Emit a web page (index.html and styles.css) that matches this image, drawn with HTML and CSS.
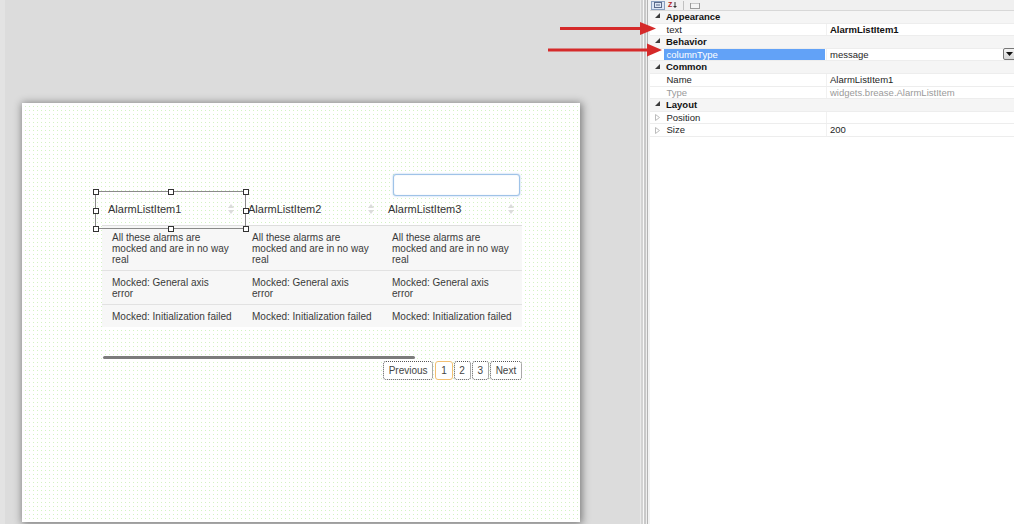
FILE: index.html
```html
<!DOCTYPE html>
<html>
<head>
<meta charset="utf-8">
<link rel="stylesheet" href="styles.css">
</head>
<body>
<div class="app">
  <div class="workspace">
    <div class="canvas">
      <div class="alarm-widget">
        <div class="filter-row"><div class="filter-input"></div></div>
        <div class="grid">
          <div class="hcell"><span>AlarmListItem1</span><svg class="sort" width="6" height="10" viewBox="0 0 6 10"><polygon points="3,0 6,4 0,4"/><polygon points="0,6 6,6 3,10"/></svg></div>
          <div class="hcell"><span>AlarmListItem2</span><svg class="sort" width="6" height="10" viewBox="0 0 6 10"><polygon points="3,0 6,4 0,4"/><polygon points="0,6 6,6 3,10"/></svg></div>
          <div class="hcell"><span>AlarmListItem3</span><svg class="sort" width="6" height="10" viewBox="0 0 6 10"><polygon points="3,0 6,4 0,4"/><polygon points="0,6 6,6 3,10"/></svg></div>

          <div class="cell">All these alarms are mocked and are in no way real</div>
          <div class="cell">All these alarms are mocked and are in no way real</div>
          <div class="cell">All these alarms are mocked and are in no way real</div>

          <div class="cell">Mocked: General axis error</div>
          <div class="cell">Mocked: General axis error</div>
          <div class="cell">Mocked: General axis error</div>

          <div class="cell last">Mocked: Initialization failed</div>
          <div class="cell last">Mocked: Initialization failed</div>
          <div class="cell last">Mocked: Initialization failed</div>
        </div>
        <div class="hscroll"></div>
        <div class="pager">
          <span class="pbtn prev">Previous</span>
          <span class="pbtn active">1</span>
          <span class="pbtn">2</span>
          <span class="pbtn">3</span>
          <span class="pbtn">Next</span>
        </div>
        <div class="selection">
          <i class="h tl"></i><i class="h tm"></i><i class="h tr"></i>
          <i class="h ml"></i><i class="h mr"></i>
          <i class="h bl"></i><i class="h bm"></i><i class="h br"></i>
        </div>
      </div>
    </div>
  </div>
  <div class="splitter"></div>
  <div class="props">
    <div class="toolbar">
      <span class="tb-btn pressed"><svg width="8" height="6" viewBox="0 0 8 6"><rect x="0.5" y="0.5" width="7" height="5" fill="none" stroke="#5a6a8a"/><line x1="2" y1="3" x2="6" y2="3" stroke="#5a6a8a"/></svg></span>
      <span class="tb-az"><b>Z</b><svg width="4" height="6" viewBox="0 0 4 6"><line x1="2" y1="0" x2="2" y2="5" stroke="#333"/><polygon points="0,4 4,4 2,6" fill="#333"/></svg></span>
      <span class="tb-sep"></span>
      <span class="tb-page"><svg width="10" height="6" viewBox="0 0 10 6"><rect x="0.5" y="0" width="9" height="5.5" fill="#f4f4f4" stroke="#9a9a9a"/></svg></span>
    </div>
    <div class="row cat"><span class="gut"><svg width="5" height="5" viewBox="0 0 5 5"><polygon points="5,0 5,5 0,5"/></svg></span><span class="cname">Appearance</span></div>
    <div class="row"><span class="gut"></span><span class="pname">text</span><span class="pval bold">AlarmListItem1</span></div>
    <div class="row cat"><span class="gut"><svg width="5" height="5" viewBox="0 0 5 5"><polygon points="5,0 5,5 0,5"/></svg></span><span class="cname">Behavior</span></div>
    <div class="row"><span class="gut"></span><span class="pname sel">columnType</span><span class="pval">message<span class="dd"><svg width="7" height="4" viewBox="0 0 7 4"><polygon points="0,0 7,0 3.5,4"/></svg></span></span></div>
    <div class="row cat"><span class="gut"><svg width="5" height="5" viewBox="0 0 5 5"><polygon points="5,0 5,5 0,5"/></svg></span><span class="cname">Common</span></div>
    <div class="row"><span class="gut"></span><span class="pname">Name</span><span class="pval">AlarmListItem1</span></div>
    <div class="row ro"><span class="gut"></span><span class="pname">Type</span><span class="pval">widgets.brease.AlarmListItem</span></div>
    <div class="row cat"><span class="gut"><svg width="5" height="5" viewBox="0 0 5 5"><polygon points="5,0 5,5 0,5"/></svg></span><span class="cname">Layout</span></div>
    <div class="row"><span class="gut"><svg class="exp" width="5" height="7" viewBox="0 0 5 7"><polygon points="0.5,0.5 4.5,3.5 0.5,6.5"/></svg></span><span class="pname">Position</span><span class="pval"></span></div>
    <div class="row"><span class="gut"><svg class="exp" width="5" height="7" viewBox="0 0 5 7"><polygon points="0.5,0.5 4.5,3.5 0.5,6.5"/></svg></span><span class="pname">Size</span><span class="pval">200</span></div>
  </div>
</div>
<svg class="arrows" width="1014" height="524" viewBox="0 0 1014 524">
  <line x1="560" y1="28.5" x2="642" y2="28.5" stroke="#d52a2a" stroke-width="3"/>
  <polygon points="640,22 656,28.5 640,35" fill="#d52a2a"/>
  <line x1="548" y1="50" x2="649" y2="50" stroke="#d52a2a" stroke-width="3"/>
  <polygon points="647,43.5 662,50 647,56.5" fill="#d52a2a"/>
</svg>
</body>
</html>
```

FILE: styles.css
```css
* { box-sizing: border-box; }
html, body { margin: 0; padding: 0; }
body {
  width: 1014px;
  height: 524px;
  overflow: hidden;
  position: relative;
  font-family: "Liberation Sans", Arial, sans-serif;
  background: #dcdcdc;
}
.app {
  display: flex;
  width: 1014px;
  height: 524px;
}
.workspace {
  width: 640px;
  height: 524px;
  flex: none;
  overflow: hidden;
  background: #dcdcdc;
  border-left: 5px solid #e3e3e3;
  padding: 103px 0 0 17px;
}
.canvas {
  width: 558px;
  height: 419px;
  background-color: #fff;
  background-image:
    linear-gradient(to right, #fff 3px, transparent 3px),
    linear-gradient(to bottom, #fff 3px, #d3f2c4 3px);
  background-size: 4px 4px;
  box-shadow: 1px 1px 8px 1px rgba(0,0,0,0.45);
  padding: 71px 0 0 80px;
}
.alarm-widget {
  position: relative;
  width: 420px;
}
.filter-row {
  display: flex;
  justify-content: flex-end;
  padding-right: 2px;
}
.filter-input {
  width: 127px;
  height: 22px;
  background: #fff;
  border: 1px solid #9fc3e8;
  border-radius: 3px;
  box-shadow: 0 0 2px rgba(120,170,225,0.7), inset 0 0 1px rgba(120,170,225,0.5);
}
.grid {
  display: grid;
  grid-template-columns: 140px 140px 140px;
  font-size: 10px;
  color: #3a3a3a;
}
.hcell {
  height: 30px;
  border-bottom: 1px solid #dedede;
  padding: 0 8px 3px 6px;
  display: flex;
  align-items: center;
  justify-content: space-between;
  font-size: 11px;
  color: #333;
}
.sort { fill: #dcdcdc; }
.cell {
  background: #f7f7f7;
  padding: 6px 10px 5px;
  line-height: 11px;
  border-bottom: 1px solid #e2e2e2;
}
.cell.last { border-bottom: none; padding-bottom: 5px; }
.hscroll {
  margin: 29px 0 0 1px;
  width: 312px;
  height: 3px;
  background: #7c7c7c;
  border-radius: 2px;
}
.pager {
  display: flex;
  justify-content: flex-end;
  gap: 1px;
  margin-top: 2px;
}
.pbtn {
  height: 19px;
  line-height: 17px;
  padding: 0 4.8px;
  font-size: 10px;
  color: #444;
  background: #fff;
  border: 1px dotted #555;
  border-radius: 3px;
}
.pbtn.prev { margin-right: 1px; }
.pbtn.active { border: 1px solid #f2bf72; }
.selection {
  position: absolute;
  left: -7px;
  top: 17px;
  width: 151px;
  height: 38px;
  border: 1px solid #8a8a8a;
}
.h {
  position: absolute;
  width: 6px;
  height: 6px;
  background: #fff;
  border: 1px solid #333;
}
.tl { left: -3.5px; top: -3.5px; }
.tm { left: 72px; top: -3.5px; }
.tr { right: -3.5px; top: -3.5px; }
.ml { left: -3.5px; top: 15.5px; }
.mr { right: -3.5px; top: 15.5px; }
.bl { left: -3.5px; bottom: -3.5px; }
.bm { left: 72px; bottom: -3.5px; }
.br { right: -3.5px; bottom: -3.5px; }

.splitter {
  width: 10px;
  flex: none;
  height: 524px;
  background: linear-gradient(to right,
    #e9e9e9 0, #e9e9e9 1px,
    #d2d2d2 1px, #d2d2d2 3px,
    #f7f7f7 3px, #f7f7f7 4px,
    #c9c9c9 4px, #c9c9c9 6px,
    #eeeeee 6px, #eeeeee 7px,
    #b4b4b4 7px, #b4b4b4 8px,
    #f3f3f3 8px, #f3f3f3 10px);
}
.props {
  width: 364px;
  flex: none;
  height: 524px;
  background: #fff;
  font-size: 9.5px;
  color: #1e1e1e;
}
.toolbar {
  height: 11px;
  display: flex;
  align-items: center;
  gap: 3px;
  padding-left: 1px;
  background: #f0f0f0;
  border-bottom: 1px solid #d8d8d8;
}
.tb-btn {
  width: 14px;
  height: 9px;
  display: flex;
  align-items: center;
  justify-content: center;
}
.tb-btn.pressed {
  background: #dce6f4;
  border: 1px solid #8aa0c0;
}
.tb-az {
  display: flex;
  align-items: center;
  height: 10px;
  gap: 1px;
}
.tb-az b { color: #b02020; font-size: 7px; line-height: 8px; }
.tb-sep { width: 1px; height: 9px; background: #c0c0c0; margin-left: 3px; }
.tb-page { margin-left: 3px; height: 7px; display: flex; align-items: flex-end; }
.row {
  height: 12.6px;
  display: grid;
  grid-template-columns: 14px 162px 1fr;
  align-items: stretch;
  border-bottom: 1px solid #ededed;
  line-height: 11.6px;
}
.row.cat { background: #f5f5f5; grid-template-columns: 14px 1fr; }
.gut {
  display: flex;
  align-items: center;
  justify-content: center;
  padding-left: 1px;
}
.gut svg { fill: #3c3c3c; margin-top: -2px; }
.gut svg.exp { fill: none; stroke: #b4b4b4; stroke-width: 0.9; margin-top: 0; }
.cname { font-weight: bold; padding-left: 2px; color: #111; }
.pname { padding-left: 2.5px; white-space: nowrap; }
.pname.sel { background: #62a2f7; color: #fff; margin-right: 1px; }
.pval {
  position: relative;
  padding-left: 3px;
  border-left: 1px solid #f1f1f1;
  white-space: nowrap;
}
.pval.bold { font-weight: bold; color: #111; }
.row.ro .pname, .row.ro .pval { color: #9a9a9a; }
.dd {
  position: absolute;
  right: -2px;
  top: -0.5px;
  width: 13px;
  height: 12px;
  border: 1px solid #777;
  border-radius: 2px;
  background: linear-gradient(#f4f4f4, #d6d6d6);
  display: flex;
  align-items: center;
  justify-content: center;
}
.dd svg { fill: #111; }
.arrows {
  position: absolute;
  left: 0;
  top: 0;
  pointer-events: none;
}
```
